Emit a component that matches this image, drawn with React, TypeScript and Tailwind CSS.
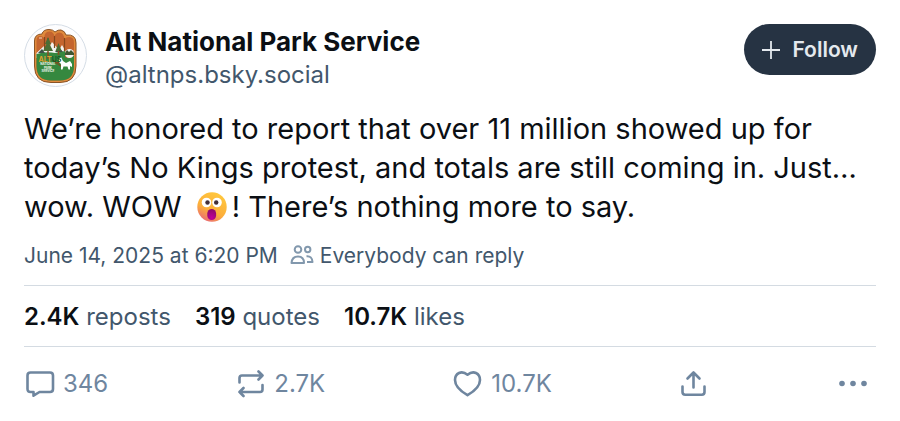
import type { ReactNode } from 'react';

const post = {
  author: 'Alt National Park Service',
  handle: '@altnps.bsky.social',
  date: 'June 14, 2025 at 6:20 PM',
  replySetting: 'Everybody can reply',
};

const stats = [
  { value: '2.4K', label: 'reposts' },
  { value: '319', label: 'quotes' },
  { value: '10.7K', label: 'likes' },
];

function Avatar() {
  return (
    <svg viewBox="0 0 63 63" className="size-[63px] shrink-0" role="img" aria-label={post.author}>
      <circle cx="31.5" cy="31.5" r="31" fill="#fdfdfe" stroke="#d5dde6" />
      {/* hand outline */}
      <path
        d="M10.5 17 Q10.5 10 18 10 Q19 5.5 25 5.5 Q29 5.5 31 8 Q34 5.5 37 6 Q41 7 42 11 Q52 10 52 19 V42 Q52 58.5 36 58.5 H27 Q10.5 58.5 10.5 42Z"
        fill="#e08a3c"
        stroke="#8a5426"
      />
      <path
        d="M12.5 42 V17 Q12.5 12 16 12 Q20 12 20.5 16 V12 Q21 7.5 25.5 7.5 Q30 7.5 30.5 13 Q31 8.5 35.5 8.5 Q40 8.5 40.5 16 Q41 13 45.5 13 Q50 13 50 19 V42 Q50 56.5 36 56.5 H27 Q12.5 56.5 12.5 42Z"
        fill="#c4652f"
      />
      {/* mountains and meadow */}
      <path d="M12.5 29 L20 22 L24 26 L28 18 L35 26 L38 21 L41 26 V34 H12.5Z" fill="#f3f4f1" />
      <path d="M12.5 30 Q22 27 31 29 L41 27 V33 Q46 36 50 31 V42 Q50 56.5 36 56.5 H27 Q12.5 56.5 12.5 42Z" fill="#35883f" />
      <path d="M14 29 L18 25 L21 29Z M31 28 L35 23 L39 28Z" fill="#3d5148" />
      <path d="M20.5 13 V25 M30.5 12 V24 M40.5 14 V27" stroke="#86471c" strokeWidth="1.2" />
      {/* trees */}
      <path d="M24 14 V35 M34.5 22 V31" stroke="#8a4b22" strokeWidth="1.5" />
      <path d="M24 13 L21 20 H22.5 L19 27 H29 L25.5 20 H27Z M34.5 19 L31.5 27 H37.5Z" fill="#4a6e35" />
      <ellipse cx="45.5" cy="29.5" rx="4.5" ry="4.5" fill="#f3f4f1" />
      <path d="M41 29 L43 26 L45 28 L47 26 L50 29 V31 H41Z" fill="#3e5632" />
      <path d="M29 36 L38 43 M31 39 L38 38" stroke="#7d4a20" strokeWidth="1.2" fill="none" />
      {/* wolf */}
      <path d="M35 35 L37 33 L39 37 L42 39 L46 37 L48 40 V43 L46 42 V45.5 H44.5 L43.5 42.5 L39.5 42.5 L38.5 45.5 H37 V40 L35 38Z" fill="#fff" />
      <path d="M15 14 H18" stroke="#f2d8bf" />
      <g fontFamily="Inter, sans-serif" fontWeight="700">
        <text x="14.5" y="37.5" fontSize="7" fill="#dca02f">
          ALT<tspan fill="#185c2a">US</tspan>
        </text>
        <g fontSize="3" fill="#eef6ea" textAnchor="middle">
          <text x="24" y="41">NATIONAL</text>
          <text x="24" y="44.5">PARK</text>
          <text x="24" y="48">SERVICE</text>
        </g>
      </g>
    </svg>
  );
}

function ShockedFace() {
  return (
    <svg viewBox="0 0 32 32" className="mr-1 ml-1.5 inline-block size-8 align-[-6px]" role="img" aria-label="Shocked face">
      <defs>
        <linearGradient id="face" x1="0.7" y1="0" x2="0.2" y2="1">
          <stop offset="0" stopColor="#ffc83d" />
          <stop offset="0.6" stopColor="#fcae3b" />
          <stop offset="1" stopColor="#e7627b" />
        </linearGradient>
        <radialGradient id="mouth" cx="0.5" cy="0.8" r="0.7">
          <stop offset="0" stopColor="#c0009b" />
          <stop offset="1" stopColor="#93076f" />
        </radialGradient>
      </defs>
      <circle cx="16" cy="16" r="14.7" fill="url(#face)" />
      <circle cx="10.5" cy="11.5" r="4.8" fill="#fff" />
      <circle cx="21" cy="11.5" r="4.8" fill="#fff" />
      <circle cx="11.5" cy="11.5" r="2.2" fill="#412d38" />
      <circle cx="20.2" cy="11.5" r="2.2" fill="#412d38" />
      <rect x="11.3" y="18" width="8.8" height="11" rx="4.4" fill="url(#mouth)" />
    </svg>
  );
}

function Icon({ children }: { children: ReactNode }) {
  return (
    <svg
      viewBox="0 0 30 30"
      className="size-[30px] shrink-0"
      fill="none"
      stroke="currentColor"
      strokeWidth="2.6"
      strokeLinecap="round"
      strokeLinejoin="round"
      aria-hidden="true"
    >
      {children}
    </svg>
  );
}

function Action({ label, count, children }: { label: string; count?: string; children: ReactNode }) {
  return (
    <button type="button" aria-label={label} className="flex items-center gap-2 text-2xl">
      <Icon>{children}</Icon>
      {count && <span>{count}</span>}
    </button>
  );
}

export default function App() {
  return (
    <article className="bg-white p-6 font-['Inter',sans-serif] text-[#0b0f14]">
      <header className="flex items-start">
        <Avatar />
        <div className="ml-[18px] min-w-0 flex-1 pt-px">
          <h1 className="text-[26px] leading-[34px] font-bold">{post.author}</h1>
          <a href="#profile" className="block text-2xl leading-8 text-[#42576c]">{post.handle}</a>
        </div>
        <button
          type="button"
          className="flex h-[51px] items-center gap-3 rounded-full bg-[#263343] px-[18px] text-[21px] font-semibold text-[#e4e9ee]"
        >
          <svg viewBox="0 0 18 18" className="size-[18px]" stroke="currentColor" strokeWidth="1.8" aria-hidden="true">
            <path d="M9 0 V18 M0 9 H18" />
          </svg>
          Follow
        </button>
      </header>

      <p className="mt-[18px] text-[29px] leading-[39px]">
        We’re honored to report that over 11 million showed up for today’s No Kings protest, and totals are still
        coming in. Just… wow. WOW <ShockedFace />! There’s nothing more to say.
      </p>

      <div className="mt-3.5 flex items-center text-[21px] leading-8 text-[#42576c]">
        <time>{post.date}</time>
        <svg viewBox="0 0 24 24" className="mr-1.5 ml-3 size-6" fill="none" stroke="#8298ad" strokeWidth="2" aria-hidden="true">
          <circle cx="8" cy="5.5" r="3.3" />
          <circle cx="17.7" cy="5.5" r="2.7" />
          <path d="M1.5 19 Q2 12.5 8 12.5 Q14 12.5 14 19Z M16.5 12.2 Q22 11.7 22.5 18 H17" strokeLinejoin="round" />
        </svg>
        <span>{post.replySetting}</span>
      </div>

      <div className="mt-[13px] flex gap-6 border-y border-[#d4dbe2] pt-[15px] pb-[13px] text-2xl leading-8">
        {stats.map(stat => (
          <a key={stat.label} href={`#${stat.label}`} className="text-[#42576c]">
            <span className="font-semibold text-[#0b0f14]">{stat.value}</span> {stat.label}
          </a>
        ))}
      </div>

      <footer className="mt-[21px] flex items-center justify-between pr-2 pl-px text-[#6f869f]">
        <Action label="Reply, 346" count="346">
          <path d="M5.5 3.5 H25 Q28 3.5 28 6.5 V20 Q28 23 25 23 H14.5 L8.5 26.7 V23 H5.5 Q2.5 23 2.5 20 V6.5 Q2.5 3.5 5.5 3.5Z" />
        </Action>
        <Action label="Repost, 2.7K" count="2.7K">
          <path d="M3.5 13.5 V9 Q3.5 6.5 6 6.5 H26.5 M22.5 2.5 L26.5 6.5 L22.5 10.5 M26.5 16 V20.5 Q26.5 23 24 23 H3.5 M7.5 19 L3.5 23 L7.5 27" />
        </Action>
        <Action label="Like, 10.7K" count="10.7K">
          <path d="M14.5 5.7 C8.5 .8 2 4.2 2 11 C2 17.5 7.2 22 14.5 26.2 C21.8 22 27 17.5 27 11 C27 4.2 20.5 .8 14.5 5.7Z" />
        </Action>
        <Action label="Share">
          <path d="M13.5 18.5 V3.5 M7.5 9.5 L13.5 3.5 L19.5 9.5 M2.5 17.5 V23 Q2.5 25.7 5.2 25.7 H21.8 Q24.5 25.7 24.5 23 V17.5" />
        </Action>
        <Action label="More options">
          <g fill="currentColor" stroke="none">
            <circle cx="4" cy="14.5" r="2.8" />
            <circle cx="15" cy="14.5" r="2.8" />
            <circle cx="26" cy="14.5" r="2.8" />
          </g>
        </Action>
      </footer>
    </article>
  );
}
